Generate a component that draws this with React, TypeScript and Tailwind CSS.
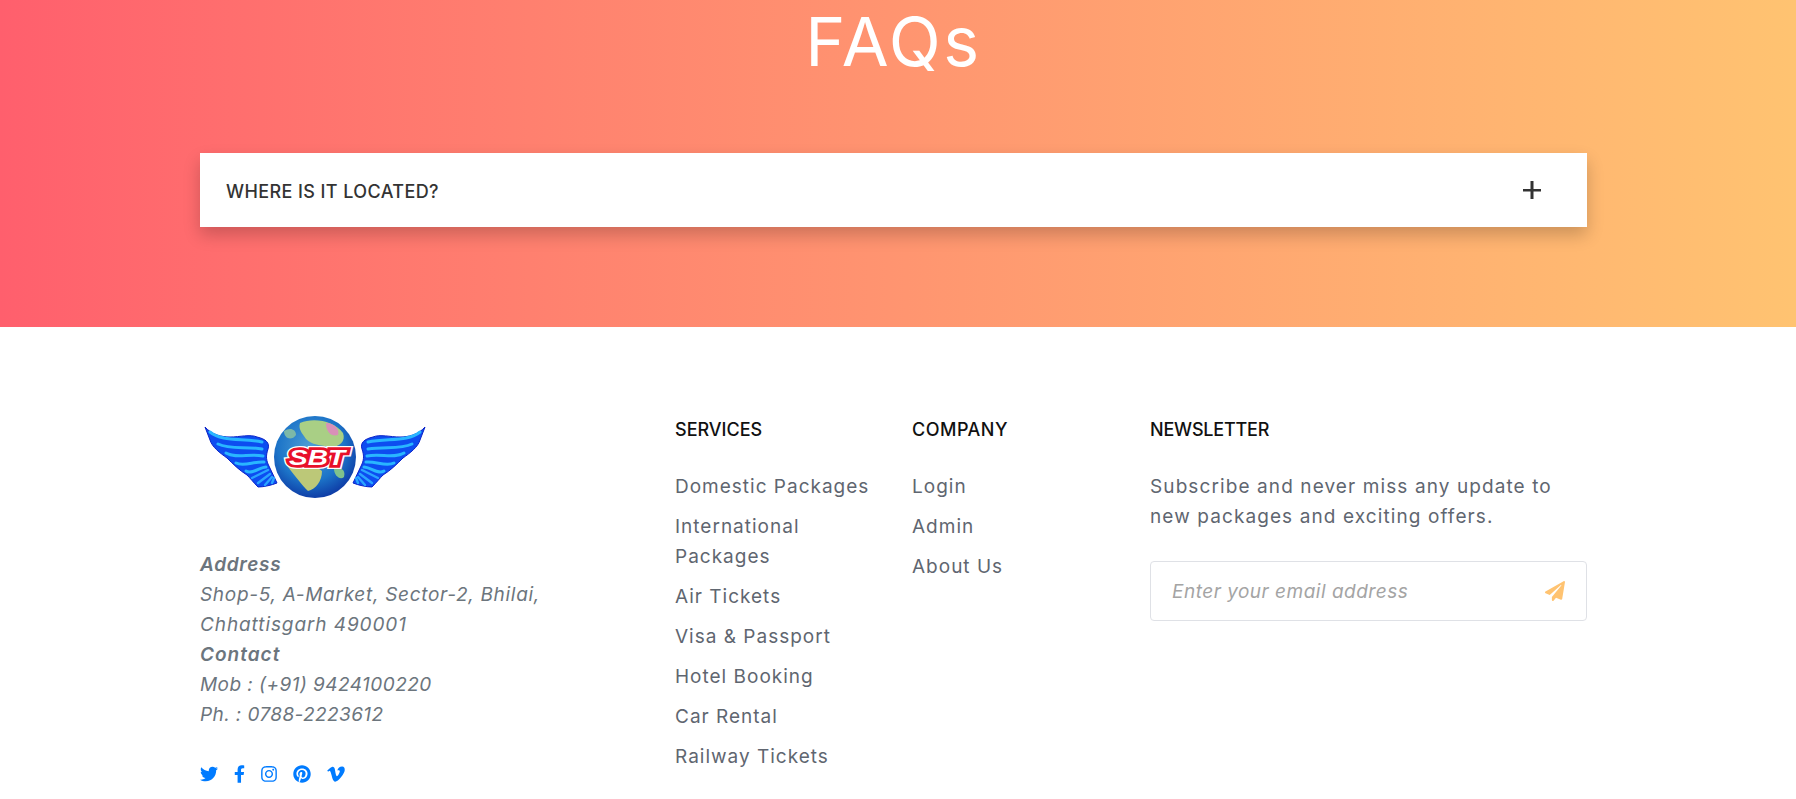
import { FaTwitter, FaFacebookF, FaInstagram, FaPinterest, FaVimeoV, FaPaperPlane } from "react-icons/fa";

const services = ["Domestic Packages", "International Packages", "Air Tickets", "Visa & Passport", "Hotel Booking", "Car Rental", "Railway Tickets"];
const company = ["Login", "Admin", "About Us"];

function Wing({ flip }: { flip?: boolean }) {
  const bands = [
    "M10 17 C22 27 42 23 62 27",
    "M18 29 C30 35 46 31 62 34",
    "M26 38 C36 44 50 38 63 41",
    "M36 48 C44 52 54 46 64 47",
    "M46 56 C52 60 60 52 66 52",
  ];
  const fan = ["M52 63 L68 55", "M58 68 L70 59", "M65 70 L72 62", "M72 68 L74 63"];
  return (
    <g transform={flip ? "translate(230 0) scale(-1 1)" : undefined}>
      <path
        d="M5 12 C12 20 22 22 30 22 C40 22 50 19 57 22 C66 24 70 28 68 34 C66 40 66 44 68 49 L77 68 C72 70 64 72 58 72 C54 68 50 63 47 60 C40 56 32 48 27 43 C20 38 12 32 10 25 Z"
        fill="#0d4df0"
        stroke="#0a22c8"
        strokeWidth="1"
      />
      {bands.map((d) => (
        <path key={d} d={d} fill="none" stroke="#29b6ff" strokeWidth="3" strokeLinecap="round" />
      ))}
      {fan.map((d) => (
        <path key={d} d={d} fill="none" stroke="#2aa4ff" strokeWidth="2.4" strokeLinecap="round" />
      ))}
    </g>
  );
}

function LogoText({ fill, stroke, width }: { fill: string; stroke?: string; width?: number }) {
  return (
    <text
      x="117"
      y="50"
      textAnchor="middle"
      textLength={56}
      lengthAdjust="spacingAndGlyphs"
      fontSize="22"
      fontWeight="700"
      fontStyle="italic"
      fontFamily="'Liberation Sans', sans-serif"
      fill={fill}
      stroke={stroke}
      strokeWidth={width}
      strokeLinejoin="miter"
    >
      SBT
    </text>
  );
}

function Logo() {
  return (
    <svg width="230" height="90" viewBox="0 0 230 90" className="block">
      <defs>
        <radialGradient id="globe" cx="45%" cy="38%" r="68%">
          <stop offset="0%" stopColor="#4f9fd6" />
          <stop offset="60%" stopColor="#1c74c8" />
          <stop offset="100%" stopColor="#0b2f9e" />
        </radialGradient>
      </defs>
      <Wing />
      <Wing flip />
      <circle cx="115" cy="42" r="41" fill="url(#globe)" />
      <path d="M100 8 C114 2 134 6 143 18 C146 26 140 32 130 32 C120 30 112 30 106 24 C102 18 98 14 100 8Z" fill="#a9cf85" />
      <path d="M88 52 C100 48 116 50 122 56 C122 66 116 74 108 76 C102 70 96 62 88 52Z" fill="#bcc878" />
      <path d="M126 8 C134 8 140 14 138 20 C132 22 126 18 126 8Z" fill="#d890b8" />
      <path d="M84 16 C90 12 96 14 96 20 C92 26 84 24 84 16Z" fill="#7cb8a8" />
      <path d="M134 54 C140 52 146 54 144 62 C140 66 134 60 134 54Z" fill="#7fc28c" />
      <LogoText fill="#ffffff" stroke="#ffffff" width={8} />
      <LogoText fill="#e8102a" stroke="#e8102a" width={5.5} />
      <LogoText fill="#ffffff" />
    </svg>
  );
}

export default function App() {
  return (
    <div className="h-[799px] overflow-hidden bg-white font-['Inter',sans-serif] text-[#5f6670]">
      <section className="h-[327px] bg-gradient-to-r from-[#ff5f6d] to-[#ffc371]">
        <div className="ml-[200px] w-[1387px]">
          <h1 className="text-center text-[68px] font-normal leading-[82px] tracking-[2.5px] text-white">FAQs</h1>
          <div className="mt-[71px] flex h-[74px] items-center justify-between bg-white pl-[26px] pr-[46px] shadow-[0_8px_16px_rgba(0,0,0,0.2)]">
            <span className="pt-[2px] text-[18px] font-medium tracking-[0.4px] text-[#333333]">WHERE IS IT LOCATED?</span>
            <svg width="18" height="18" viewBox="0 0 18 18">
              <path d="M7.5 0h3v18h-3zM0 8h18v2.5H0z" fill="#333333" />
            </svg>
          </div>
        </div>
      </section>

      <footer className="ml-[200px] grid w-[1387px] grid-cols-[475px_237px_238px_1fr] pt-[88px]">
        <div>
          <Logo />
          <div className="mt-[45px] text-[19px] italic leading-[30px] tracking-[0.7px] text-[#6c757d]">
            <div className="font-semibold">Address</div>
            <div>Shop-5, A-Market, Sector-2, Bhilai,</div>
            <div className="tracking-[0.9px]">Chhattisgarh 490001</div>
            <div className="font-semibold tracking-[1px]">Contact</div>
            <div className="tracking-[0.45px]">Mob : (+91) 9424100220</div>
            <div className="tracking-[0.4px]">Ph. : 0788-2223612</div>
          </div>
          <div className="mt-[34px] flex items-center gap-[16px] text-[#007bff]">
            <FaTwitter className="h-[18px] w-[18px]" />
            <FaFacebookF className="h-[18px] w-[11px]" />
            <FaInstagram className="h-[18px] w-[16px]" />
            <FaPinterest className="h-[18px] w-[18px]" />
            <FaVimeoV className="h-[20px] w-[18px]" />
          </div>
        </div>

        <div className="pr-[28px]">
          <h4 className="text-[18px] font-medium leading-[30px] text-[#111111]">SERVICES</h4>
          <ul className="mt-[27px] flex flex-col gap-[10px] text-[19px] leading-[30px] tracking-[1px]">
            {services.map((s) => (
              <li key={s}>{s}</li>
            ))}
          </ul>
        </div>

        <div>
          <h4 className="text-[18px] font-medium leading-[30px] tracking-[0.5px] text-[#111111]">COMPANY</h4>
          <ul className="mt-[27px] flex flex-col gap-[10px] text-[19px] leading-[30px] tracking-[1px]">
            {company.map((s) => (
              <li key={s}>{s}</li>
            ))}
          </ul>
        </div>

        <div>
          <h4 className="text-[18px] font-medium leading-[30px] tracking-[-0.2px] text-[#111111]">NEWSLETTER</h4>
          <p className="mt-[27px] pr-[20px] text-[19px] leading-[30px] tracking-[1.1px]">
            Subscribe and never miss any update to new packages and exciting offers.
          </p>
          <div className="mt-[29px] flex h-[60px] items-center justify-between rounded-[4px] border border-[#dfe1e6] pl-[21px] pr-[21px]">
            <span className="pt-[2px] text-[19px] italic tracking-[0.5px] text-[#a4a4a4]">Enter your email address</span>
            <FaPaperPlane className="text-[20px] text-[#ffc371]" />
          </div>
        </div>
      </footer>
    </div>
  );
}
